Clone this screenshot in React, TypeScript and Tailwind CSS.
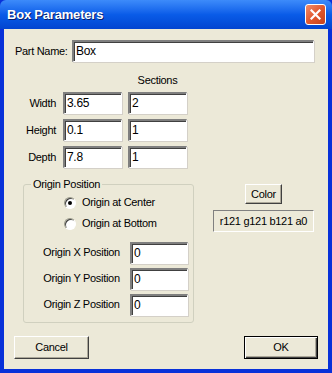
import React from "react"

const font = "font-['Liberation_Sans',Arial,sans-serif] text-[11px] tracking-[-0.3px] text-black"

const Field = ({ value, className = "" }: { value: string; className?: string }) => (
  <div
    className={`h-[22px] bg-white border-t-2 border-l-2 border-b border-r border-t-[#7f7f7f] border-l-[#7f7f7f] border-b-white border-r-white shadow-[inset_1px_1px_0_#404040,1px_1px_0_#d4d0c8] pl-[2px] pt-[1px] leading-[16px] text-[12px] ${className}`}
  >
    {value}
  </div>
)

const Btn = ({ label, def = false, className = "" }: { label: string; def?: boolean; className?: string }) => (
  <div
    className={`flex items-center justify-center bg-[#ece9d8] ${
      def
        ? "border border-black shadow-[inset_1px_1px_0_#fff,inset_-1px_-1px_0_#404040,inset_-2px_-2px_0_#aca899]"
        : "border-t border-l border-white border-b border-r border-b-[#404040] border-r-[#404040] shadow-[inset_-1px_-1px_0_#aca899]"
    } ${className}`}
  >
    {label}
  </div>
)

const Radio = ({ label, checked }: { label: string; checked?: boolean }) => (
  <div className="flex items-center h-[21px]">
    <div className="w-[12px] h-[12px] rounded-full bg-white border border-[#9a9a8a] border-b-white border-r-white shadow-[inset_1px_1px_0_#404040] flex items-center justify-center ml-[40px]">
      {checked && <div className="w-[4px] h-[4px] rounded-full bg-black" />}
    </div>
    <span className="ml-[6px]">{label}</span>
  </div>
)

export default function App() {
  return (
    <div className={`w-[332px] h-[373px] flex flex-col bg-[#0831d9] ${font}`}>
      <div className="h-[29px] flex items-center bg-gradient-to-b from-[#3d8bfa] via-[#0a5ce8] to-[#0344d0] rounded-t-[6px]">
        <span className="pl-[7px] text-white font-bold text-[13px] tracking-[-0.2px] [text-shadow:1px_1px_0_#0a1e6a]">
          Box Parameters
        </span>
        <div className="ml-auto mr-[6px] w-[21px] h-[21px] rounded-[3px] border border-white bg-gradient-to-br from-[#f08c6a] via-[#e2582e] to-[#c7421c] flex items-center justify-center">
          <svg width="11" height="11" viewBox="0 0 11 11">
            <path d="M1.5 1.5 L9.5 9.5 M9.5 1.5 L1.5 9.5" stroke="white" strokeWidth="2.2" strokeLinecap="square" />
          </svg>
        </div>
      </div>

      <div className="flex-1 mx-[4px] mb-[4px] bg-[#ece9d8] flex flex-col pt-[11px]">
        <div className="flex items-center h-[22px]">
          <span className="ml-[11px] w-[57px]">Part Name:</span>
          <Field value="Box" className="w-[242px]" />
        </div>

        <div className="ml-[124px] w-[59px] text-center mt-[12px] leading-[13px]">Sections</div>

        <div className="flex flex-col gap-[5px] mt-[5px]">
          {[
            ["Width", "3.65", "2"],
            ["Height", "0.1", "1"],
            ["Depth", "7.8", "1"],
          ].map(([l, a, b]) => (
            <div key={l} className="flex items-center h-[22px]">
              <span className="w-[52px] text-right">{l}</span>
              <Field value={a} className="w-[59px] ml-[7px]" />
              <Field value={b} className="w-[59px] ml-[6px]" />
            </div>
          ))}
        </div>

        <div className="flex items-start mt-[10px]">
          <fieldset className="ml-[19px] w-[171px] h-[145px] border border-[#d0d0bf] rounded-[3px] px-0 pb-0 pt-[1px] m-0">
            <legend className="ml-[7px] px-[2px] leading-[13px]">Origin Position</legend>
            <Radio label="Origin at Center" checked />
            <Radio label="Origin at Bottom" />
            <div className="flex flex-col gap-[5px] mt-[8px]">
              {["X", "Y", "Z"].map((k) => (
                <div key={k} className="flex items-center h-[21px]">
                  <span className="w-[98px] pl-[17px] text-center">Origin {k} Position</span>
                  <Field value="0" className="w-[58px] ml-[8px]" />
                </div>
              ))}
            </div>
          </fieldset>

          <div className="ml-[19px] flex flex-col items-center mt-[6px]">
            <Btn label="Color" className="w-[37px] h-[20px]" />
            <div className="mt-[6px] w-[101px] h-[22px] border-t border-l border-[#808080] border-b border-r border-b-white border-r-white flex items-center justify-center">
              r121 g121 b121 a0
            </div>
          </div>
        </div>

        <div className="flex justify-between mt-[13px] px-[10px]">
          <Btn label="Cancel" className="w-[75px] h-[23px]" />
          <Btn label="OK" def className="w-[74px] h-[23px]" />
        </div>
      </div>
    </div>
  )
}
